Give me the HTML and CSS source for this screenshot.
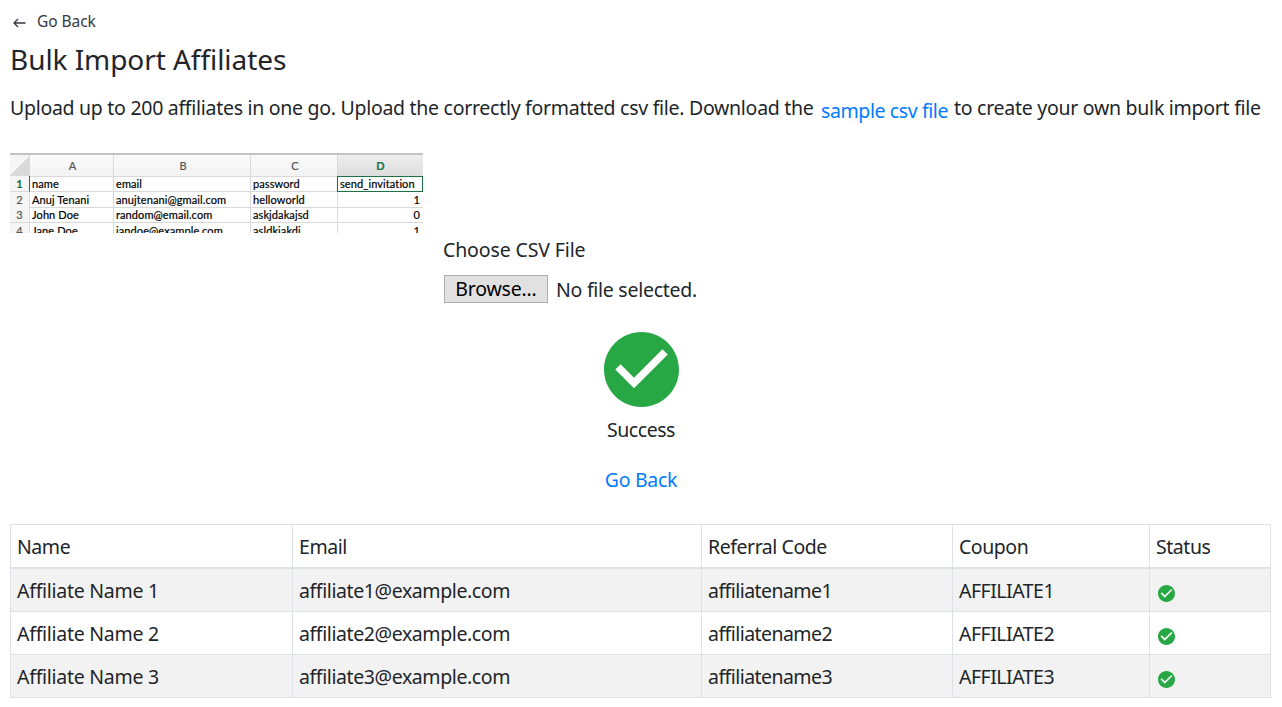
FILE: index.html
```html
<!DOCTYPE html>
<html lang="en">
<head>
<meta charset="utf-8">
<title>Bulk Import Affiliates</title>
<link rel="stylesheet" href="styles.css">
</head>
<body>
<svg class="defs" width="0" height="0" aria-hidden="true">
  <symbol id="check" viewBox="2 2 20 20"><path d="M12 2C6.48 2 2 6.48 2 12s4.480 10 10 10 10-4.480 10-10S17.520 2 12 2zm-2 15l-5-5 1.410-1.410L10 14.170l7.590-7.590L19 8l-9 9z"/></symbol>
</svg>
<main class="page">
  <a class="back">
    <svg class="arrow" viewBox="0 0 13 10"><path d="M12.500 5H1.200M5 1L1 5l4 4"/></svg>
    <span>Go Back</span>
  </a>
  <h1 class="title"><span>Bulk Import Affiliates</span></h1>
  <p class="intro"><span class="lead">Upload up to 200 affiliates in one go. Upload the correctly formatted csv file. Download the</span><a class="sample">sample csv file</a><span class="tail">to create your own bulk import file</span></p>

  <section class="upload">
    <div class="sheet">
      <div class="row letters"><i class="corner"></i><b>A</b><b>B</b><b>C</b><b class="active">D</b></div>
      <div class="row first"><i class="num on">1</i><span>name</span><span>email</span><span>password</span><span class="selected">send_invitation</span></div>
      <div class="row"><i class="num">2</i><span>Anuj Tenani</span><span>anujtenani@gmail.com</span><span>helloworld</span><span class="right">1</span></div>
      <div class="row"><i class="num">3</i><span>John Doe</span><span>random@email.com</span><span>askjdakajsd</span><span class="right">0</span></div>
      <div class="row"><i class="num">4</i><span>Jane Doe</span><span>jandoe@example.com</span><span>asldkjakdj</span><span class="right">1</span></div>
    </div>
    <div class="picker">
      <label class="choose">Choose CSV File</label>
      <div class="file"><button class="browse">Browse...</button><span class="nofile">No file selected.</span></div>
    </div>
  </section>

  <section class="result">
    <svg class="big"><use href="#check"/></svg>
    <div class="success">Success</div>
    <a class="again">Go Back</a>
  </section>

  <table class="list">
    <colgroup><col class="c1"><col class="c2"><col class="c3"><col class="c4"><col class="c5"></colgroup>
    <thead><tr><th>Name</th><th>Email</th><th>Referral Code</th><th>Coupon</th><th>Status</th></tr></thead>
    <tbody>
      <tr><td class="name">Affiliate Name 1</td><td class="mail">affiliate1@example.com</td><td class="code">affiliatename1</td><td class="coupon">AFFILIATE1</td><td><svg class="ok"><use href="#check"/></svg></td></tr>
      <tr><td class="name">Affiliate Name 2</td><td class="mail">affiliate2@example.com</td><td class="code">affiliatename2</td><td class="coupon">AFFILIATE2</td><td><svg class="ok"><use href="#check"/></svg></td></tr>
      <tr><td class="name">Affiliate Name 3</td><td class="mail">affiliate3@example.com</td><td class="code">affiliatename3</td><td class="coupon">AFFILIATE3</td><td><svg class="ok"><use href="#check"/></svg></td></tr>
    </tbody>
  </table>
</main>
</body>
</html>
```
FILE: styles.css
```css
* { box-sizing: border-box; }
body { margin: 0; background: #fff; color: #212529; font: 19.5px/30px "Noto Sans", "Open Sans", sans-serif; white-space: nowrap; overflow: hidden; }
.defs { display: block; height: 0; }
.page { width: 1282px; padding: 9px 11px 0 10px; }
.back { display: flex; align-items: center; height: 24px; padding-left: 3px; gap: 11px; font-size: 15.5px; line-height: 24px; color: #343a40; letter-spacing: -.05px; }
.arrow { width: 13px; height: 10px; margin-top: 4px; fill: none; stroke: #343a40; stroke-width: 1.300; }
.title { margin: 8px 0 0; height: 37px; font-size: 28px; line-height: 36px; font-weight: 400; letter-spacing: -.06px; }
.intro { display: flex; margin: 15px 0 0; height: 30px; }
.lead { width: 811px; letter-spacing: -.285px; }
.sample { width: 133px; padding-top: 3px; color: #007bff; letter-spacing: -.4px; }
.tail { letter-spacing: -.27px; }
.upload { display: flex; margin-top: 30px; height: 160px; gap: 20px; }
.sheet { width: 413px; height: 80px; overflow: hidden; border-top: 2px solid #c3c3c3; font: 11px/15px Lato, sans-serif; color: #000; letter-spacing: .1px; -webkit-text-stroke: .2px; }
.row { display: grid; grid-template-columns: 20px 84px 137px 87px 85px; height: 15.500px; }
.row > * { border-right: 1px solid #d9d9d9; border-bottom: 1px solid #d9d9d9; padding-left: 2px; font-style: normal; }
.row > :last-child { border-right: 0; }
.letters { height: 21px; background: linear-gradient(#fafafa, #f3f3f3); color: #555; line-height: 21px; }
.letters b { font-weight: 400; text-align: center; }
.letters .corner { background: linear-gradient(135deg, #f5f5f5 51%, #d9d9d9 52%); }
.letters .active { background: linear-gradient(#eee, #ddd); color: #1e7145; font-weight: 700; padding: 0; }
.row .num { background: #f5f5f5; color: #555; text-align: center; padding: 0; }
.row .on { color: #1e7145; font-weight: 700; border-right: 1px solid #1e7145; }
.row .selected { border: 1px solid #1e7145; padding-left: 2px; margin-left: -1px; line-height: 14px; }
.row .right { text-align: right; padding-right: 3px; }
.picker { padding-top: 82px; }
.choose { display: block; height: 30px; letter-spacing: -.13px; }
.file { display: flex; margin: 10px 0 0 1px; gap: 8px; }
.browse { width: 104px; height: 28px; padding: 0; border: 1px solid #adadad; border-radius: 0; background: #e1e1e1; color: #000; font: inherit; line-height: 26px; letter-spacing: -.2px; }
.nofile { line-height: 30px; letter-spacing: -.27px; }
.result { display: flex; flex-direction: column; align-items: center; height: 211px; padding: 18.5px 0 0 1px; letter-spacing: -.45px; }
.big { width: 75px; height: 75px; fill: #28a745; }
.success { margin-top: 8.5px; }
.again { margin-top: 20px; color: #007bff; letter-spacing: -.3px; }
.list { width: 1261px; table-layout: fixed; border-collapse: separate; border-spacing: 0; border-right: 1px solid #dee2e6; }
.c1 { width: 282px; } .c2 { width: 409px; } .c3 { width: 251px; } .c4 { width: 197px; }
.list th, .list td { height: 43px; padding: 2px 0 0 6px; border-left: 1px solid #dee2e6; border-bottom: 1px solid #dee2e6; font-weight: 400; text-align: left; line-height: 30px; }
.list th { height: 45px; border-top: 1px solid #dee2e6; border-bottom-width: 2px; letter-spacing: -.45px; }
.list .name { letter-spacing: -.27px; }
.list .mail { letter-spacing: -.4px; }
.list .code { letter-spacing: -.55px; }
.list .coupon { letter-spacing: -.5px; }
.list tbody tr:nth-child(odd) { background: #f2f2f2; }
.ok { display: block; width: 17px; height: 17px; margin: 4px 0 0 1.5px; fill: #28a745; }
```
